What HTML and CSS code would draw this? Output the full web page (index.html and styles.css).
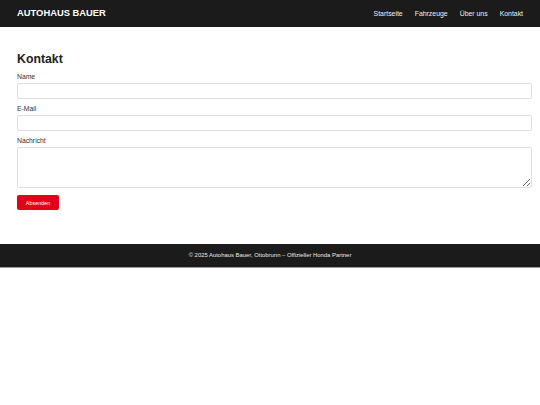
FILE: index.html
```html
<!DOCTYPE html>
<html lang="de">
<head>
<meta charset="utf-8">
<title>Kontakt – Autohaus Bauer</title>
<link rel="stylesheet" href="styles.css">
</head>
<body>
<header class="topbar">
  <div class="logo">AUTOHAUS BAUER</div>
  <nav class="nav">
    <a href="#">Startseite</a>
    <a href="#">Fahrzeuge</a>
    <a href="#">Über uns</a>
    <a href="#">Kontakt</a>
  </nav>
</header>
<main class="content">
  <h1 class="title">Kontakt</h1>
  <form class="form">
    <label class="label" for="name">Name</label>
    <input class="field" id="name" type="text">
    <label class="label" for="mail">E-Mail</label>
    <input class="field" id="mail" type="email">
    <label class="label" for="msg">Nachricht</label>
    <textarea class="field area" id="msg"></textarea>
    <button class="btn" type="button">Absenden</button>
  </form>
</main>
<footer class="footer">© 2025 Autohaus Bauer, Ottobrunn – Offizieller Honda Partner</footer>
</body>
</html>
```
FILE: styles.css
```css
* { box-sizing: border-box; }
html, body { margin: 0; padding: 0; background: #fff; }
body { font-family: "Liberation Sans", Arial, sans-serif; color: #222; line-height: 1.15; }
.topbar {
  height: 27px;
  background: #1b1b1b;
  display: flex;
  align-items: center;
  justify-content: space-between;
  padding: 0 17px;
}
.logo { color: #fff; font-weight: bold; font-size: 9.4px; }
.nav { display: flex; gap: 12px; }
.nav a { color: #f0f0f0; text-decoration: none; font-size: 6.9px; }
.content { padding: 25px 8px 34px 17px; }
.title { margin: 0 0 7px; font-size: 12.3px; font-weight: bold; color: #222; line-height: 14px; }
.form { display: flex; flex-direction: column; align-items: flex-start; }
.label { font-size: 6.8px; color: #333; line-height: 8px; margin-bottom: 2px; }
.field {
  width: 100%;
  height: 16px;
  border: 1px solid #dedede;
  border-radius: 2px;
  margin: 0 0 6px;
  padding: 2px 4px;
  font: inherit;
  font-size: 7px;
  background: #fff;
}
.area { height: 41px; resize: vertical; margin-bottom: 7px; }
.btn {
  width: 42px;
  height: 15px;
  border: 0;
  border-radius: 2px;
  background: #e3001b;
  color: #fff;
  font-family: "Liberation Sans", Arial, sans-serif;
  font-size: 5.4px;
  padding: 0;
}
.footer {
  height: 24px;
  background: #1b1b1b;
  color: #e8e8e8;
  font-size: 5.9px;
  display: flex;
  align-items: center;
  justify-content: center;
  border-bottom: 1px solid #9a9a9a;
}
```
